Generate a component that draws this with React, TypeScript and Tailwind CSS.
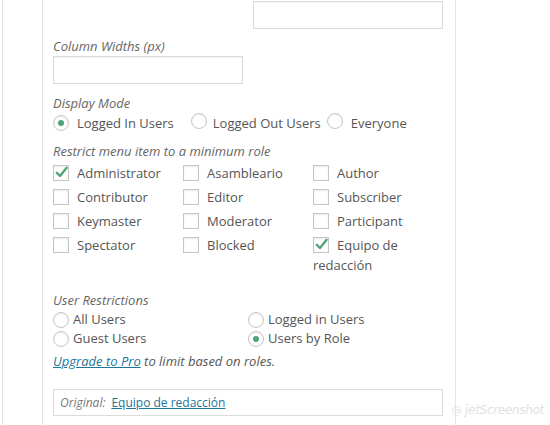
import React from "react";

const Radio = ({ checked }: { checked?: boolean }) => (
  <span className="inline-flex h-[16px] w-[16px] shrink-0 items-center justify-center rounded-full border border-[#c5c5c5] bg-white shadow-[inset_0_1px_2px_rgba(0,0,0,0.08)]">
    {checked && <span className="h-[6px] w-[6px] rounded-full bg-[#4fa37a]" />}
  </span>
);

const Check = ({ checked }: { checked?: boolean }) => (
  <span className="relative inline-flex h-[16px] w-[16px] shrink-0 items-center justify-center border border-[#c5c5c5] bg-white shadow-[inset_0_1px_2px_rgba(0,0,0,0.08)]">
    {checked && (
      <svg viewBox="0 0 16 16" className="absolute -left-[1px] -top-[2px] h-[17px] w-[17px]">
        <path d="M3.5 8.2 L6.6 11.3 L12.8 3.6" fill="none" stroke="#4fa37a" strokeWidth="2.2" strokeLinecap="round" strokeLinejoin="round" />
      </svg>
    )}
  </span>
);

const roles: [string, boolean][] = [
  ["Administrator", true],
  ["Asambleario", false],
  ["Author", false],
  ["Contributor", false],
  ["Editor", false],
  ["Subscriber", false],
  ["Keymaster", false],
  ["Moderator", false],
  ["Participant", false],
  ["Spectator", false],
  ["Blocked", false],
  ["Equipo de redacción", true],
];

export default function App() {
  return (
    <div
      className="relative flex h-[425px] w-[550px] overflow-hidden bg-white text-[13px] text-[#555]"
      style={{ fontFamily: '"Open Sans", "Noto Sans", sans-serif' }}
    >
      <div className="ml-[2px] w-[41px] shrink-0 border-l border-r border-[#e5e5e5]" />
      <div className="w-[413px] shrink-0 border-r border-[#e5e5e5] pl-[10px]">
        <div className="flex w-[390px] flex-col">
          <div className="mt-[1px] flex justify-end">
            <div className="h-[28px] w-[190px] border border-[#dcdcdc] bg-white shadow-[inset_0_1px_2px_rgba(0,0,0,0.05)]" />
          </div>
          <div className="mt-[7px] leading-[20px] italic text-[#666]">Column Widths (px)</div>
          <div className="h-[28px] w-[190px] border border-[#dcdcdc] bg-white shadow-[inset_0_1px_2px_rgba(0,0,0,0.05)]" />
          <div className="mt-[9px] leading-[20px] italic text-[#666]">Display Mode</div>
          <div className="flex h-[20px] items-center leading-[20px]">
            <Radio checked />
            <span className="ml-[8px]">Logged In Users</span>
            <span className="ml-[17px]">
              <Radio />
            </span>
            <span className="ml-[6px]">Logged Out Users</span>
            <span className="ml-[6px]">
              <Radio />
            </span>
            <span className="ml-[8px]">Everyone</span>
          </div>
          <div className="mt-[8px] leading-[20px] italic text-[#666]">Restrict menu item to a minimum role</div>
          <div className="grid grid-cols-[130px_130px_130px]">
            {roles.map(([name, checked]) => (
              <div key={name} className="py-[2px] leading-[20px]">
                <span className="mr-[8px] inline-flex align-[-3px]">
                  <Check checked={checked} />
                </span>
                {name}
              </div>
            ))}
          </div>
          <div className="mt-[13px] leading-[20px] italic text-[#666]">User Restrictions</div>
          <div className="grid grid-cols-[195px_195px] leading-[19px]">
            {[
              ["All Users", false],
              ["Logged in Users", false],
              ["Guest Users", false],
              ["Users by Role", true],
            ].map(([label, c]) => (
              <div key={label as string} className="flex h-[19px] items-center">
                <Radio checked={c as boolean} />
                <span className="ml-[4px]">{label as string}</span>
              </div>
            ))}
          </div>
          <div className="mt-[3px] leading-[20px] italic text-[#555]">
            <a className="text-[#21759b] underline">Upgrade to Pro</a> to limit based on roles.
          </div>
          <div className="mt-[18px] flex h-[27px] items-center border border-[#dcdcdc] pl-[6px] text-[12px]">
            <span className="italic text-[#777]">Original:</span>
            <a className="ml-[6px] text-[#21759b] underline">Equipo de redacción</a>
          </div>
        </div>
      </div>
      <div className="absolute bottom-[6px] right-[6px] text-[12px] italic tracking-tight text-[#e2e2e2]" style={{ fontFamily: '"DejaVu Sans", sans-serif' }}>
        ◎ jetScreenshot
      </div>
    </div>
  );
}
